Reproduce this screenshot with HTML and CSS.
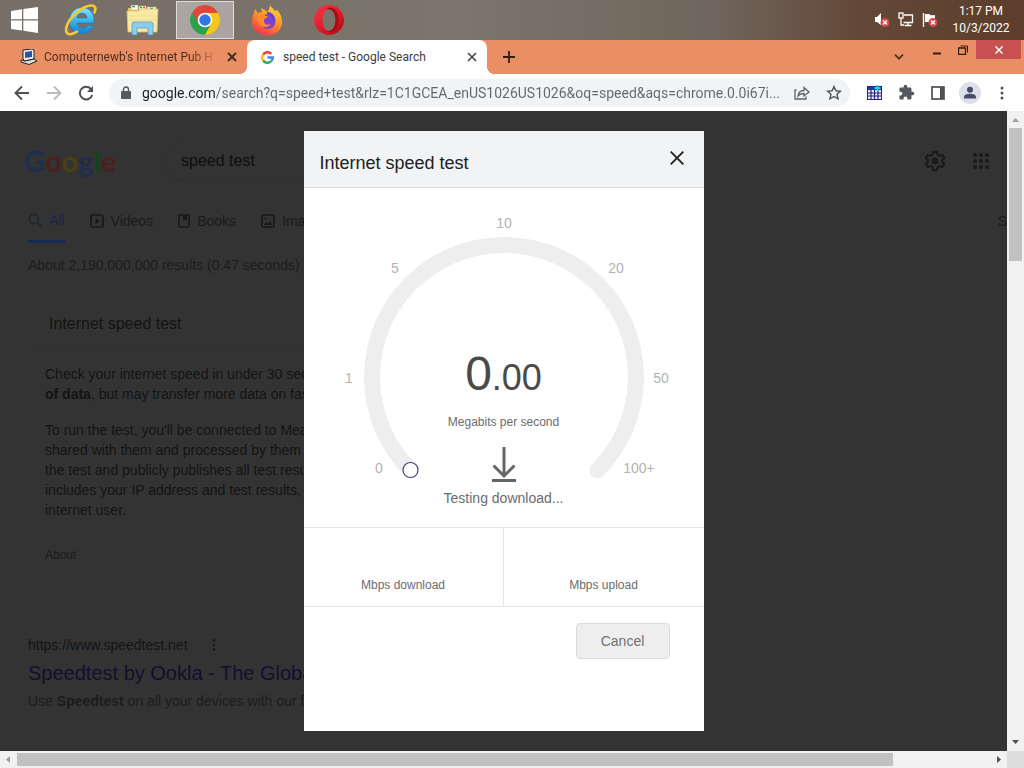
FILE: index.html
```html
<!DOCTYPE html>
<html lang="en">
<head>
<meta charset="utf-8">
<meta name="viewport" content="width=device-width, initial-scale=1">
<title>speed test - Google Search</title>
<link rel="stylesheet" href="styles.css">
</head>
<body>
<header class="taskbar">
  <button class="task start" aria-label="Start">
    <svg width="28" height="26" viewBox="0 0 28 26" fill="#fff"><path d="M0 4 11 2.300V12.300H0zM12.300 2.100 27 0V12.300H12.300zM0 13.600H11V23.600L0 22zM12.300 13.600H27V26L12.300 23.800z"/></svg>
  </button>
  <button class="task" aria-label="Internet Explorer">
    <svg width="34" height="34" viewBox="0 0 34 34">
      <defs><linearGradient id="ie" x1="0" y1="0" x2="0" y2="1"><stop offset="0" stop-color="#8be4fb"/><stop offset=".5" stop-color="#39b5ee"/><stop offset="1" stop-color="#1683cf"/></linearGradient></defs>
      <path d="M18 4.500c7 0 12 5 12 12.500v3H13c.5 3.500 2.500 5 5.500 5 2.300 0 4-1 5-2.500h6C27.500 27.500 23.500 30.500 18 30.500c-7.500 0-12.500-5.500-12.500-13S10.500 4.500 18 4.500zM13 15h10c-.3-3-2-4.700-5-4.700s-4.700 1.700-5 4.700z" fill="url(#ie)" stroke="#1a78b5" stroke-width=".6"/>
      <path d="M30.500 9.500C32.500 5 31 2 26.500 2.500 17 4 5 14.500 2.500 24c-1.300 5 .5 8 5 7 2-.4 3.500-1 5.500-2.300" fill="none" stroke="#f7c931" stroke-width="2.600" stroke-linecap="round"/>
    </svg>
  </button>
  <button class="task" aria-label="File Explorer">
    <svg width="34" height="30" viewBox="0 0 34 30">
      <path d="M2 3h9l2 2h17v22H2z" fill="#e5c665"/>
      <path d="M5 0h7v5H5zM13 1h7v5h-7zM21 2h9v5h-9z" fill="#fffdf0" stroke="#cfae52" stroke-width=".6"/>
      <path d="M6 1.500h3M14 2.500h2" stroke="#369447" stroke-width="1.600"/><path d="M17 2.500h2" stroke="#d54e35" stroke-width="1.600"/><path d="M24 3.500h3" stroke="#348abd" stroke-width="1.600"/>
      <path d="M1 6h12l2-2h17l-1 23H2z" fill="#f8e9a3" stroke="#dfc269" stroke-width=".8"/>
      <path d="M3 11h28M3 15h28" stroke="#f0db88"/>
      <path d="M6 30V19q0-2 2-2h17q2 0 2 2v11h-5v-7H11v7z" fill="#8ecbed" stroke="#4e9ec9" stroke-width=".8"/>
    </svg>
  </button>
  <button class="task open" aria-label="Google Chrome">
    <svg width="32" height="32" viewBox="0 0 48 48">
      <path d="M24 24 4.900 13A22 22 0 0 1 43.100 13z" fill="#e2453a"/>
      <path d="M24 24 43.100 13A22 22 0 0 1 24 46z" fill="#fbc716"/>
      <path d="M24 24 24 46A22 22 0 0 1 4.900 13z" fill="#2da04f"/>
      <path d="M24 13h19.100A22 22 0 0 1 24 46l9.500-16.500z" fill="#fbc716"/>
      <path d="M4.900 13A22 22 0 0 1 43.100 13H24L14.500 29.500z" fill="#e2453a"/>
      <path d="M4.900 13 14.500 29.500Q20 36 24 35l9.500-5.500L24 46A22 22 0 0 1 4.900 13z" fill="#2da04f"/>
      <circle cx="24" cy="24" r="11" fill="#fff"/><circle cx="24" cy="24" r="8.600" fill="#2f78e6"/>
    </svg>
  </button>
  <button class="task" aria-label="Firefox">
    <svg width="32" height="32" viewBox="0 0 32 32">
      <defs><linearGradient id="ff" x1=".8" y1="0" x2=".3" y2="1"><stop offset="0" stop-color="#ffe338"/><stop offset=".45" stop-color="#ff9a21"/><stop offset="1" stop-color="#f5304f"/></linearGradient></defs>
      <path d="M19 0c0 3 3 4 5 7l2-1c3 3 5 7 5 12 0 8-6 13.500-14.500 13.500S1 26 1 18C1 12 3 10 4 5l3 4 4-1-1-4c3 1 5 3 6 4 2-2 3-4 3-8z" fill="url(#ff)"/>
      <circle cx="17" cy="17.500" r="7.500" fill="#7b43cc"/>
      <path d="M7 12c4-3 7 0 10 0-1 2-4 2-4 5s3 5 7 3c-2 4-9 4-12 0-2-3-2-5-1-8z" fill="#ff8a2b"/>
      <path d="M16 9c4 0 7 3 7 7" fill="none" stroke="#5a3be0" stroke-width="2"/>
    </svg>
  </button>
  <button class="task" aria-label="Opera">
    <svg width="32" height="32" viewBox="0 0 32 32">
      <defs><linearGradient id="op" x1="0" y1="0" x2="1" y2="1"><stop offset="0" stop-color="#ff3344"/><stop offset=".6" stop-color="#dc1724"/><stop offset="1" stop-color="#a5060f"/></linearGradient></defs>
      <path fill-rule="evenodd" d="M16 1a15 15 0 1 1 0 30 15 15 0 0 1 0-30zm0 4c-4 0-6.500 5-6.500 11S12 27 16 27s6.500-5 6.500-11S20 5 16 5z" fill="url(#op)"/>
      <path d="M13 5.500C16 3 20 3.500 22.500 6c4 4.500 4 15.500 0 20-2.500 2.500-6.500 3-9.500.5 6 2 9.500-3.500 9.500-10.500S19 4 13 5.500z" fill="#a90b14"/>
    </svg>
  </button>
  <div class="tray">
    <svg width="16" height="16" viewBox="0 0 16 16"><path d="M1 5h2l4-4v12L3 10H1z" fill="#fff"/><circle cx="11" cy="10.500" r="4.500" fill="#d84848"/><path d="m9 8.500 4 4m0-4-4 4" stroke="#fff" stroke-width="1.500"/></svg>
    <svg width="16" height="16" viewBox="0 0 16 16" fill="none" stroke="#fff" stroke-width="1.300"><path d="M6 3h8.500v7.500H5.500M10 10.500V13M6.500 13.500h7M3 6v7h3"/><rect x="1" y="1" width="4" height="5"/></svg>
    <svg width="16" height="16" viewBox="0 0 16 16"><path d="M1.500 1v14" stroke="#fff" stroke-width="1.400"/><path d="M3 2h4q2 2 6 1v7H3z" fill="#fff"/><circle cx="11" cy="10.500" r="4.500" fill="#d84848"/><path d="m9 8.500 4 4m0-4-4 4" stroke="#fff" stroke-width="1.500"/></svg>
  </div>
  <div class="clock"><span>1:17 PM</span><span>10/3/2022</span></div>
</header>

<div class="tabs">
  <div class="tab">
    <svg width="18" height="16" viewBox="0 0 18 16"><path d="M3 1 12 0l2 1v9L5 12 3 10z" fill="#eee" stroke="#222"/><path d="m5 3 7-1v6l-7 1z" fill="#2b54a5"/><path d="m1 11 4 1 9-2 3 2-8 3.500L1 13z" fill="#ddd" stroke="#222"/></svg>
    <span class="tab-title faded">Computernewb's Internet Pub H</span>
    <button class="icon-btn" aria-label="Close tab"><svg width="10" height="10" viewBox="0 0 10 10"><path d="m1 1 8 8m0-8-8 8" stroke="#3c2a22" stroke-width="1.800"/></svg></button>
  </div>
  <div class="tab active">
    <svg width="13" height="13" viewBox="0 0 48 48" fill="none" stroke-width="9"><path d="M8 13A19.500 19.500 0 0 1 38 10.500" stroke="#ea4335"/><path d="M8 35a19.500 19.500 0 0 1 0-22" stroke="#fbbc05"/><path d="M37 38.500A19.500 19.500 0 0 1 8 35" stroke="#34a853"/><path d="M24 24h19.500q0 9-6.500 14.500" stroke="#4285f4"/></svg>
    <span class="tab-title">speed test - Google Search</span>
    <button class="icon-btn" aria-label="Close tab"><svg width="10" height="10" viewBox="0 0 10 10"><path d="m1 1 8 8m0-8-8 8" stroke="#444" stroke-width="1.600"/></svg></button>
  </div>
  <button class="icon-btn new-tab" aria-label="New tab"><svg width="12" height="12" viewBox="0 0 12 12"><path d="M6 0v12M0 6h12" stroke="#2e1d14" stroke-width="1.800"/></svg></button>
  <button class="icon-btn search-tabs" aria-label="Search tabs"><svg width="10" height="6" viewBox="0 0 10 6"><path d="m1 .7 4 4 4-4" fill="none" stroke="#4e2d1e" stroke-width="1.700"/></svg></button>
  <div class="win">
    <button aria-label="Minimize"><svg width="10" height="12" viewBox="0 0 10 12"><path d="M1 9.500h8" stroke="#2e1d14" stroke-width="2"/></svg></button>
    <button aria-label="Restore"><svg width="10" height="10" viewBox="0 0 10 10" fill="none" stroke="#2e1d14"><path d="M.5 3h7v6.500h-7z" stroke-width="1.300"/><path d="M2.500 1h7v6.500"/></svg></button>
    <button class="win-close" aria-label="Close"><svg width="8" height="8" viewBox="0 0 8 8"><path d="m.5.5 7 7m0-7-7 7" stroke="#fff" stroke-width="1.500"/></svg></button>
  </div>
</div>

<div class="toolbar">
  <button class="tool" aria-label="Back"><svg width="16" height="16" viewBox="0 0 16 16" fill="none" stroke="#4d5155" stroke-width="1.900"><path d="M15 8H2m6-6.500L1.500 8 8 14.500"/></svg></button>
  <button class="tool" aria-label="Forward"><svg width="16" height="16" viewBox="0 0 16 16" fill="none" stroke="#b9bbbe" stroke-width="1.900"><path d="M1 8h13M8 1.500 14.500 8 8 14.500"/></svg></button>
  <button class="tool" aria-label="Reload"><svg width="16" height="16" viewBox="0 0 16 16"><path d="M13.300 4.500A6.300 6.300 0 1 0 14.200 10" fill="none" stroke="#4d5155" stroke-width="2"/><path d="M15 1v6H9z" fill="#4d5155"/></svg></button>
  <div class="omnibox">
    <svg width="10" height="14" viewBox="0 0 10 14"><path d="M2.500 6V3.500a2.500 2.500 0 0 1 5 0V6" fill="none" stroke="#55595d" stroke-width="1.400"/><rect y="5" width="10" height="8" rx="1" fill="#55595d"/></svg>
    <input class="url" type="text" aria-label="Address" value="google.com/search?q=speed+test&amp;rlz=1C1GCEA_enUS1026US1026&amp;oq=speed&amp;aqs=chrome.0.0i67i...">
    <button class="tool" aria-label="Share"><svg width="16" height="14" viewBox="0 0 16 14" fill="none" stroke="#5f6368" stroke-width="1.300"><path d="M2.500 4H1v9h11v-2.500M4 10q.5-5.500 6-5.500v-3L15 6l-5 4V7.500Q6 7.500 4 10z"/></svg></button>
    <button class="tool" aria-label="Bookmark"><svg width="16" height="16" viewBox="0 0 16 16" fill="none" stroke="#505458" stroke-width="1.400"><path d="m8 1.500 1.900 4.300 4.600.4-3.500 3.100 1.100 4.600L8 11.500l-4.100 2.400L5 9.300 1.500 6.200l4.600-.4z"/></svg></button>
  </div>
  <button class="tool" aria-label="Extension"><svg width="15" height="15" viewBox="0 0 15 15"><rect x=".5" y="1.500" width="14" height="13" fill="#eef" stroke="#23237e"/><path d="M1 2h13v3H1z" fill="#2438ac"/><path d="M1 8h13M1 11h13M4 5v9M7.500 5v9M11 5v9" stroke="#23237e" stroke-width="1.200"/><path d="M10.500 0v6M7.500 3h6" stroke="#18d6ee" stroke-width="2"/></svg></button>
  <button class="tool" aria-label="Extensions"><svg width="17" height="17" viewBox="0 0 24 24" fill="#55595d"><path d="M20.500 11H19V7a2 2 0 0 0-2-2h-4V3.500a2.500 2.500 0 0 0-5 0V5H4a2 2 0 0 0-2 2v3.800h1.500a2.700 2.700 0 0 1 0 5.400H2V20c0 1.100.9 2 2 2h3.800v-1.500a2.700 2.700 0 0 1 5.400 0V22H17a2 2 0 0 0 2-2v-4h1.500a2.500 2.500 0 0 0 0-5z"/></svg></button>
  <button class="tool" aria-label="Side panel"><svg width="14" height="14" viewBox="0 0 14 14"><rect x="1" y="1" width="12" height="12" fill="none" stroke="#4d5155" stroke-width="1.700"/><path d="M9 1h4v12H9z" fill="#4d5155"/></svg></button>
  <button class="tool" aria-label="Profile"><svg width="22" height="22" viewBox="0 0 22 22"><circle cx="11" cy="11" r="11" fill="#dddfea"/><circle cx="11" cy="7.800" r="3" fill="#484c66"/><path d="M5 16.500v-1.500c0-2 3-3.200 6-3.200s6 1.200 6 3.200v1.500z" fill="#484c66"/></svg></button>
  <button class="tool" aria-label="Menu"><svg width="4" height="14" viewBox="0 0 4 14" fill="#4d5155"><circle cx="2" cy="2" r="1.500"/><circle cx="2" cy="7" r="1.500"/><circle cx="2" cy="12" r="1.500"/></svg></button>
</div>

<div class="view">
  <main class="page">
    <div class="search-head">
      <a class="logo" href="#" aria-label="Google"><span class="b">G</span><span class="r">o</span><span class="y">o</span><span class="b">g</span><span class="g">l</span><span class="r">e</span></a>
      <input class="query" type="text" aria-label="Search" value="speed test">
      <button class="icon-btn gear" aria-label="Settings"><svg width="22" height="22" viewBox="0 0 24 24" fill="none" stroke="#1b1b1b" stroke-width="2.400"><path d="M10 2h4l.7 3 2.300 1.300 3-.9 2 3.500L19.800 11v2l2.200 2.100-2 3.500-3-.9-2.300 1.300-.7 3h-4l-.7-3L7 17.700l-3 .9-2-3.500L4.200 13v-2L2 8.900l2-3.500 3 .9L9.300 5z"/><circle cx="12" cy="12" r="2.500" fill="#1b1b1b"/></svg></button>
      <button class="icon-btn" aria-label="Google apps"><svg width="16" height="16" viewBox="0 0 16 16" fill="#1b1b1b"><circle cx="2" cy="2" r="2"/><circle cx="8" cy="2" r="2"/><circle cx="14" cy="2" r="2"/><circle cx="2" cy="8" r="2"/><circle cx="8" cy="8" r="2"/><circle cx="14" cy="8" r="2"/><circle cx="2" cy="14" r="2"/><circle cx="8" cy="14" r="2"/><circle cx="14" cy="14" r="2"/></svg></button>
    </div>
    <nav class="kinds">
      <a class="current" href="#"><svg width="14" height="14" viewBox="0 0 14 14" fill="none" stroke="#1d2533" stroke-width="1.500"><circle cx="6" cy="6" r="4.500"/><path d="m9.500 9.500 4 4"/></svg>All</a>
      <a href="#"><svg width="14" height="14" viewBox="0 0 14 14"><rect x="1" y="1" width="12" height="12" rx="1.500" fill="none" stroke="#191919" stroke-width="1.700"/><path d="M5.500 4v6L10 7z" fill="#191919"/></svg>Videos</a>
      <a href="#"><svg width="12" height="14" viewBox="0 0 12 14"><rect x="1" y="1" width="10" height="12" rx="1" fill="none" stroke="#191919" stroke-width="1.600"/><path d="M5 1h4v6L7 5.500 5 7z" fill="#191919"/></svg>Books</a>
      <a href="#"><svg width="14" height="14" viewBox="0 0 14 14"><rect x="1" y="1" width="12" height="12" rx="1.500" fill="none" stroke="#191919" stroke-width="1.600"/><path d="m3 11 2.500-3L7 9.500 9 7l2.500 4z" fill="#191919"/><circle cx="4.500" cy="4.500" r="1" fill="#191919"/></svg>Images</a>
      <span class="more">S</span>
    </nav>
    <p class="count">About 2,190,000,000 results (0.47 seconds)</p>
    <section class="card">
      <h2>Internet speed test</h2>
      <div class="card-text">
        <p>Check your internet speed in under 30 seconds.<br><b>of data</b>, but may transfer more data on fast</p>
        <p>To run the test, you'll be connected to Measurement<br>shared with them and processed by them in<br>the test and publicly publishes all test results<br>includes your IP address and test results, but<br>internet user.</p>
        <a class="about" href="#">About</a>
      </div>
    </section>
    <article class="result">
      <div class="site">https://www.speedtest.net<svg width="4" height="12" viewBox="0 0 4 12" fill="#151515"><circle cx="2" cy="1.500" r="1.200"/><circle cx="2" cy="6" r="1.200"/><circle cx="2" cy="10.500" r="1.200"/></svg></div>
      <h3><a href="#">Speedtest by Ookla - The Global</a></h3>
      <p>Use <b>Speedtest</b> on all your devices with our free</p>
    </article>
  </main>

  <div class="overlay">
    <section class="dialog" role="dialog" aria-labelledby="dialog-title">
      <header class="dialog-head">
        <h1 id="dialog-title">Internet speed test</h1>
        <button class="icon-btn" aria-label="Close"><svg width="14" height="14" viewBox="0 0 14 14"><path d="m.7.700 12.600 12.600m0-12.600L.7 13.300" stroke="#222" stroke-width="1.900"/></svg></button>
      </header>
      <div class="gauge">
        <svg class="dial" viewBox="0 0 400 339">
          <path d="M106.700 282.300A132 132 0 1 1 293.300 282.300" fill="none" stroke="#eee" stroke-width="16" stroke-linecap="round"/>
          <circle cx="106.500" cy="282" r="7.500" fill="#fff" stroke="#443d8c" stroke-width="1.200"/>
          <g class="marks"><text x="75" y="285">0</text><text x="45" y="195">1</text><text x="91" y="85">5</text><text x="200" y="40">10</text><text x="312" y="85">20</text><text x="357" y="195">50</text><text x="335" y="285">100+</text></g>
        </svg>
        <div class="readout">
          <div class="value">0<span>.00</span></div>
          <div class="unit">Megabits per second</div>
          <svg class="down" width="24" height="36" viewBox="0 0 24 36" fill="none" stroke="#666" stroke-width="3"><path d="M12 0v28M1.500 18.500 12 29l10.500-10.500M0 33.500h24"/></svg>
          <div class="status">Testing download...</div>
        </div>
      </div>
      <div class="stats"><div>Mbps download</div><div>Mbps upload</div></div>
      <footer class="dialog-foot"><button class="cancel">Cancel</button></footer>
    </section>
  </div>

  <div class="vbar">
    <svg width="7" height="4" viewBox="0 0 7 4" fill="#a0a0a0"><path d="M3.500 0 7 4H0z"/></svg>
    <div class="vtrack"><div class="vthumb"></div></div>
    <svg width="7" height="4" viewBox="0 0 7 4" fill="#505050"><path d="M0 0h7L3.500 4z"/></svg>
  </div>
</div>
<div class="hbar">
  <svg width="4" height="7" viewBox="0 0 4 7" fill="#a0a0a0"><path d="M4 0v7L0 3.500z"/></svg>
  <div class="htrack"><div class="hthumb"></div></div>
  <svg width="4" height="7" viewBox="0 0 4 7" fill="#505050"><path d="M0 0v7l4-3.500z"/></svg>
  <div class="corner"></div>
</div>
</body>
</html>
```

FILE: styles.css
```css
* { box-sizing: border-box; }
body {
  margin: 0;
  height: 100vh;
  display: flex;
  flex-direction: column;
  overflow: hidden;
  background: #fff;
  font-family: "Liberation Sans", Arial, sans-serif;
  font-size: 14px;
}
button { border: 0; padding: 0; background: none; font: inherit; display: flex; align-items: center; justify-content: center; }
input { border: 0; padding: 0; outline: 0; background: none; font: inherit; min-width: 0; }
svg { flex: none; display: block; }
h1, h2, h3, p { margin: 0; font-weight: normal; }
a { color: inherit; text-decoration: none; }

/* Taskbar */
.taskbar {
  flex: none;
  height: 40px;
  display: flex;
  align-items: center;
  background: linear-gradient(90deg, #766e67, #7c756b 45%, #6f655c 70%, #634838 84%, #5d3d2b);
}
.task { width: 58px; height: 38px; margin: 0 2px; }
.start { width: 50px; margin: 0; }
.open { background: #aaa5a0; border: 1px solid #dedbd8; }
.tray { margin-left: auto; display: flex; gap: 8px; }
.clock {
  width: 86px;
  display: flex;
  flex-direction: column;
  align-items: center;
  color: #fff;
  font: 12px/17px Roboto, "Open Sans", sans-serif;
}

/* Tab strip */
.tabs { flex: none; height: 34px; display: flex; align-items: center; background: #ea8f65; }
.tab {
  width: 247px;
  height: 34px;
  padding: 0 10px 0 20px;
  display: flex;
  align-items: center;
  gap: 6px;
  color: #4b2a1b;
  font: 12px/16px Roboto, "Open Sans", sans-serif;
}
.tab-title { flex: 1; min-width: 0; white-space: nowrap; overflow: hidden; }
.faded { color: transparent; background: linear-gradient(90deg, #4b2a1b 145px, #e08a62 175px); -webkit-background-clip: text; background-clip: text; }
.tab.active {
  position: relative;
  width: 240px;
  padding-left: 14px;
  gap: 9px;
  color: #3c4043;
  background: #fff;
  border-radius: 8px 8px 0 0;
}
.tab.active::before, .tab.active::after { content: ""; position: absolute; bottom: 0; width: 8px; height: 8px; }
.tab.active::before { right: 100%; background: radial-gradient(circle at 0 0, transparent 8px, #fff 8px); }
.tab.active::after { left: 100%; background: radial-gradient(circle at 100% 0, transparent 8px, #fff 8px); }
.icon-btn { flex: none; }
.new-tab { margin-left: 16px; }
.search-tabs { margin: 0 20px 0 auto; }
.win { align-self: flex-start; display: flex; padding-right: 3px; }
.win button { width: 26px; height: 19px; }
.win .win-close { width: 45px; background: #c75050; }

/* Toolbar */
.toolbar { flex: none; height: 37px; padding: 0 6px; display: flex; align-items: center; }
.tool { flex: none; width: 32px; height: 28px; }
.omnibox {
  flex: 1;
  min-width: 0;
  height: 28px;
  margin: 0 8px 0 7px;
  padding-left: 12px;
  display: flex;
  align-items: center;
  border-radius: 14px;
  background: #f1f3f4;
}
.url {
  flex: 1;
  height: 24px;
  margin-left: 11px;
  font: 14px/24px Roboto, "Open Sans", sans-serif;
  color: transparent;
  background: linear-gradient(90deg, #202124 74px, #63676b 74px);
  -webkit-background-clip: text;
  background-clip: text;
}

/* Results page */
.view { position: relative; flex: 1; min-height: 0; display: flex; }
.page { flex: 1; min-width: 0; overflow: hidden; background: #333; color: #141414; white-space: nowrap; }
.search-head { height: 64px; margin-top: 18px; padding: 0 18px 0 24px; display: flex; align-items: center; }
.logo { width: 141px; font: 700 29px/36px Lato, "Open Sans", sans-serif; }
.b { color: #1f2e4c; }
.r { color: #4a201d; }
.y { color: #494013; }
.g { color: #17401f; }
.query { width: 520px; height: 38px; padding-left: 16px; border-radius: 19px; font-size: 16px; color: #0e0e0e; box-shadow: 0 1px 2px #303030; }
.gear { margin-left: auto; margin-right: 27px; }
.kinds { height: 50px; padding-left: 28px; display: flex; align-items: flex-end; gap: 25px; color: #1a1a1a; }
.kinds a { height: 44px; display: flex; align-items: center; gap: 7px; }
.kinds .current { color: #172748; border-bottom: 3px solid #172b52; }
.more { margin-left: auto; line-height: 44px; }
.count { padding-left: 28px; line-height: 20px; margin-top: 12px; color: #1c1c1c; }
.card { width: 652px; margin: 29px 0 0 28px; }
.card h2 { height: 43px; padding-left: 21px; border-bottom: 1px solid #303030; font-size: 16px; line-height: 40px; }
.card-text { padding: 17px 17px 0; line-height: 20px; }
.card-text p + p { margin-top: 16px; }
.about { display: block; margin-top: 25px; font-size: 12px; color: #1c1c1c; }
.result { margin: 70px 0 0 28px; line-height: 20px; }
.site { display: flex; align-items: center; gap: 24px; }
.result h3 { font-size: 20px; line-height: 36px; color: #120f30; }
.result p { color: #1c1c1c; }

/* Dialog */
.overlay { position: absolute; inset: 0 17px 0 0; padding: 20px 0; display: flex; justify-content: center; }
.dialog { width: 400px; display: flex; flex-direction: column; background: #fff; color: #6a6c6f; }
.dialog-head { height: 57px; padding: 5px 20px 0 16px; display: flex; justify-content: space-between; background: #f1f3f4; border-bottom: 1px solid #dadce0; color: #202124; }
.dialog-head h1 { font-size: 18px; line-height: 54px; }
.dialog-head .icon-btn { height: 44px; }
.gauge { display: grid; }
.gauge > * { grid-area: 1 / 1; }
.dial { width: 100%; }
.marks { font-size: 14px; fill: #b2b2b2; text-anchor: middle; }
.readout { padding-top: 158px; display: flex; flex-direction: column; align-items: center; }
.value { font-size: 48px; line-height: 56px; color: #4a4a4a; }
.value span { font-size: 36px; }
.unit { margin-top: 8px; font-size: 12px; line-height: 16px; }
.down { margin-top: 17px; }
.status { margin-top: 5px; line-height: 20px; }
.stats { display: grid; grid-template-columns: 1fr 1fr; height: 80px; border: solid #e6e6e6; border-width: 1px 0; font-size: 12px; text-align: center; }
.stats div { padding-top: 49px; line-height: 16px; }
.stats div:first-child { border-right: 1px solid #e6e6e6; }
.dialog-foot { padding: 16px 34px; display: flex; justify-content: flex-end; }
.cancel { width: 94px; height: 36px; border: 1px solid #dcdcdc; border-radius: 4px; background: #eee; color: #707274; }

/* Scrollbars */
.vbar { flex: none; width: 17px; display: flex; flex-direction: column; align-items: center; justify-content: space-between; padding: 7px 0; background: #f1f1f1; }
.vtrack { flex: 1; width: 13px; margin: 6px 0; }
.vthumb { height: 22%; background: #c1c1c1; }
.hbar { flex: none; height: 17px; display: flex; align-items: center; padding-left: 6px; background: #f1f1f1; }
.htrack { flex: 1; height: 13px; margin: 0 7px; }
.hthumb { width: 90%; height: 13px; background: #c1c1c1; }
.corner { width: 17px; height: 17px; margin-left: 6px; background: #dcdcdc; }
```
